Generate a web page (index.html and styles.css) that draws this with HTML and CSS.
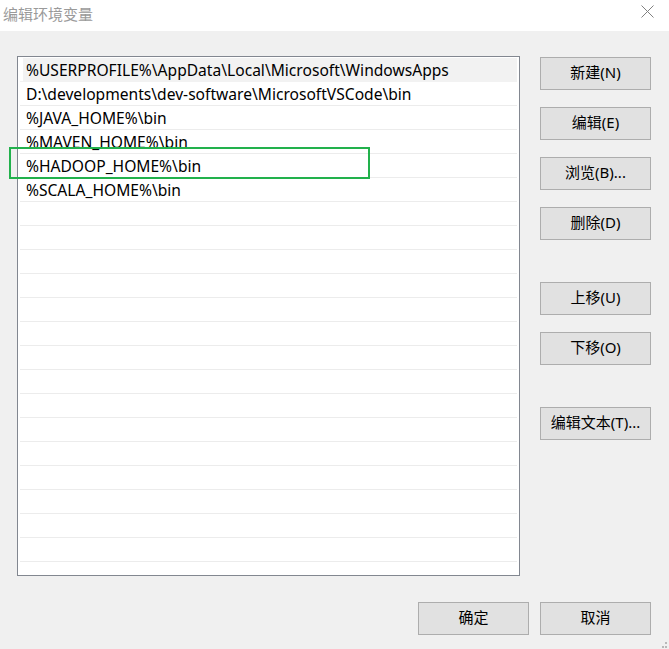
FILE: index.html
```html
<!DOCTYPE html>
<html lang="zh-CN">
<head>
<meta charset="utf-8">
<title>编辑环境变量</title>
<link rel="stylesheet" href="styles.css">
</head>
<body>
<div class="window">
  <div class="titlebar">
    <span class="title">编辑环境变量</span>
    <span class="close">
      <svg width="13" height="13" viewBox="0 0 13 13"><path d="M0.5 0.5 L12.5 12.5 M12.5 0.5 L0.5 12.5" stroke="#808080" stroke-width="1" fill="none"/></svg>
    </span>
  </div>
  <div class="main">
    <div class="list">
      <div class="row first">%USERPROFILE%\AppData\Local\Microsoft\WindowsApps</div>
      <div class="row">D:\developments\dev-software\MicrosoftVSCode\bin</div>
      <div class="row">%JAVA_HOME%\bin</div>
      <div class="row">%MAVEN_HOME%\bin</div>
      <div class="row">%HADOOP_HOME%\bin</div>
      <div class="row">%SCALA_HOME%\bin</div>
      <div class="row"></div>
      <div class="row"></div>
      <div class="row"></div>
      <div class="row"></div>
      <div class="row"></div>
      <div class="row"></div>
      <div class="row"></div>
      <div class="row"></div>
      <div class="row"></div>
      <div class="row"></div>
      <div class="row"></div>
      <div class="row"></div>
      <div class="row"></div>
      <div class="row"></div>
      <div class="row"></div>
    </div>
    <div class="side">
      <div class="group">
        <button class="btn">新建(N)</button>
        <button class="btn">编辑(E)</button>
        <button class="btn">浏览(B)...</button>
        <button class="btn">删除(D)</button>
      </div>
      <div class="group">
        <button class="btn">上移(U)</button>
        <button class="btn">下移(O)</button>
      </div>
      <div class="group">
        <button class="btn">编辑文本(T)...</button>
      </div>
    </div>
  </div>
  <div class="footer">
    <button class="btn">确定</button>
    <button class="btn">取消</button>
  </div>
  <div class="highlight"></div>
  <div class="grip"><i></i><i></i><i></i></div>
</div>
</body>
</html>
```

FILE: styles.css
```css
html, body {
  margin: 0;
  padding: 0;
}
body {
  background: #f0f0f0;
  font-family: "Noto Sans", "Noto Sans CJK SC", sans-serif;
  font-size: 15px;
  color: #000;
}
.window {
  position: relative;
  width: 669px;
  height: 649px;
  overflow: hidden;
}
.titlebar {
  height: 31px;
  background: #fff;
  display: flex;
  align-items: flex-start;
  justify-content: space-between;
}
.title {
  font-family: "Noto Sans CJK SC", sans-serif;
  color: #9a9a9a;
  font-size: 15px;
  line-height: 26px;
  padding-left: 3px;
  padding-top: 1px;
}
.close {
  width: 13px;
  height: 13px;
  margin-top: 5px;
  margin-right: 15px;
  display: flex;
}
.main {
  display: flex;
  padding: 25px 0 0 17px;
  gap: 20px;
}
.list {
  width: 499px;
  height: 517px;
  border: 1px solid #828790;
  background: #fff;
  padding: 1px 1px 0 1px;
  box-sizing: content-box;
  overflow: hidden;
}
.row {
  height: 23px;
  line-height: 24px;
  border-bottom: 1px solid #ececec;
  padding-left: 6px;
  white-space: nowrap;
  margin: 0 1px;
  font-size: 15.6px;
}
.row.first {
  background: linear-gradient(#f2f2f2, #f2f2f2) no-repeat 3px 0 / calc(100% - 3px) 100%;
  border-bottom-color: #f2f2f2;
}
.side {
  display: flex;
  flex-direction: column;
  gap: 42px;
  padding-top: 1px;
}
.group {
  display: flex;
  flex-direction: column;
  gap: 17px;
}
.btn {
  width: 111px;
  height: 33px;
  background: #e1e1e1;
  border: 1px solid #adadad;
  font-family: "Noto Sans", "Noto Sans CJK SC", sans-serif;
  font-size: 15px;
  color: #000;
  padding: 0 0 3px 0;
  margin: 0;
  line-height: 27px;
}
.footer {
  display: flex;
  justify-content: flex-end;
  gap: 11px;
  padding-right: 18px;
  margin-top: 26px;
}
.highlight {
  position: absolute;
  left: 9px;
  top: 147px;
  width: 357px;
  height: 28px;
  border: 2px solid #22b14c;
}
.grip {
  position: absolute;
  right: 2px;
  bottom: 1px;
  width: 6px;
  height: 6px;
}
.grip i {
  position: absolute;
  width: 2px;
  height: 2px;
  background: #b8b8b8;
}
.grip i:nth-child(1) { right: 0; top: 0; }
.grip i:nth-child(2) { right: 0; bottom: 0; }
.grip i:nth-child(3) { right: 3px; bottom: 0; }
```
